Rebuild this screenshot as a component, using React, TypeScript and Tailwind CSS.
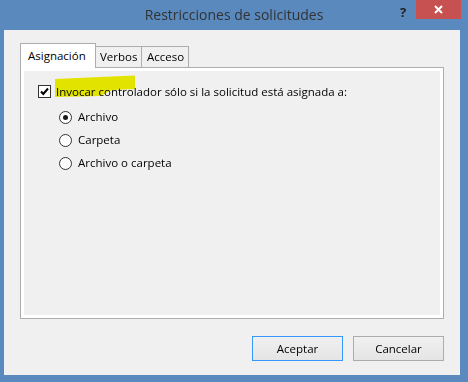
import React from "react";

const ui = { fontFamily: '"Open Sans", "Noto Sans", sans-serif' };

function Check() {
  return (
    <span className="flex h-[13px] w-[13px] items-center justify-center border border-[#333] bg-white">
      <svg width="11" height="11" viewBox="0 0 11 11">
        <path d="M2 5.5 L4.3 8 L9 2.5" fill="none" stroke="#000" strokeWidth="2" />
      </svg>
    </span>
  );
}

function Radio({ on }: { on?: boolean }) {
  return (
    <span className="flex h-[13px] w-[13px] items-center justify-center rounded-full border border-[#333] bg-white">
      {on && <span className="h-[5px] w-[5px] rounded-full bg-[#1a1a1a]" />}
    </span>
  );
}

const options = ["Archivo", "Carpeta", "Archivo o carpeta"];

export default function App() {
  return (
    <div className="relative h-[382px] w-[468px] bg-[#5a89be] text-[11.5px] text-black" style={ui}>
      {/* title bar */}
      <div className="relative flex h-[30px] items-center justify-center">
        <span className="pb-[1px] text-[14px] text-[#333]">Restricciones de solicitudes</span>
        <span className="absolute left-[400px] top-[3px] text-[13px] font-bold text-[#222]">?</span>
        <span className="absolute left-[416px] top-0 flex h-[19px] w-[45px] items-center justify-center bg-[#c75050]">
          <svg width="9" height="9" viewBox="0 0 9 9">
            <path d="M1 1 L8 8 M8 1 L1 8" stroke="#fff" strokeWidth="2" />
          </svg>
        </span>
      </div>

      {/* client */}
      <div className="ml-[4px] flex h-[345px] w-[456px] flex-col bg-[#f0f0f0] pl-[16px] pt-[13px]">
        <div className="flex items-end">
          <div className="relative z-10 -mb-[1px] flex h-[25px] w-[76px] items-start border border-b-0 border-[#adadad] bg-white pl-[7px] pt-[3px]">
            Asignación
          </div>
          <div className="-ml-[1px] flex h-[21px] w-[47px] items-center border border-b-0 border-[#adadad] bg-[#f0f0f0] pl-[4px]">
            Verbos
          </div>
          <div className="-ml-[1px] flex h-[21px] w-[48px] items-center border border-b-0 border-[#adadad] bg-[#f0f0f0] pl-[5px]">
            Acceso
          </div>
        </div>
        <div className="h-[252px] w-[424px] border border-[#adadad] bg-white p-[2px]">
          <div className="flex h-full flex-col border border-white bg-[#f0f0f0] pl-[14px] pt-[13px]">
            <label className="flex items-center gap-[5px]">
              <Check />
              <span className="leading-[15px]">Invocar controlador sólo si la solicitud está asignada a:</span>
            </label>
            <div className="mt-[11px] flex flex-col gap-[9px] pl-[21px]">
              {options.map((o, i) => (
                <label key={o} className="flex items-center gap-[6px]">
                  <Radio on={i === 0} />
                  <span className="leading-[14px]">{o}</span>
                </label>
              ))}
            </div>
          </div>
        </div>
        <div className="mt-[17px] flex w-[424px] justify-end gap-[10px]">
          <button className="h-[25px] w-[91px] border border-[#3399ff] bg-gradient-to-b from-[#f0f0f0] to-[#e5e5e5]">
            Aceptar
          </button>
          <button className="h-[25px] w-[91px] border border-[#acacac] bg-gradient-to-b from-[#f0f0f0] to-[#e5e5e5]">
            Cancelar
          </button>
        </div>
      </div>

      {/* highlighter mark */}
      <svg className="pointer-events-none absolute left-0 top-0 mix-blend-multiply" width="468" height="382">
        <path d="M55 79 L100 77 L135 75.5 L135 89 L112 90 L100 96 L55 97 Z" fill="#f2f200" />
      </svg>
    </div>
  );
}
